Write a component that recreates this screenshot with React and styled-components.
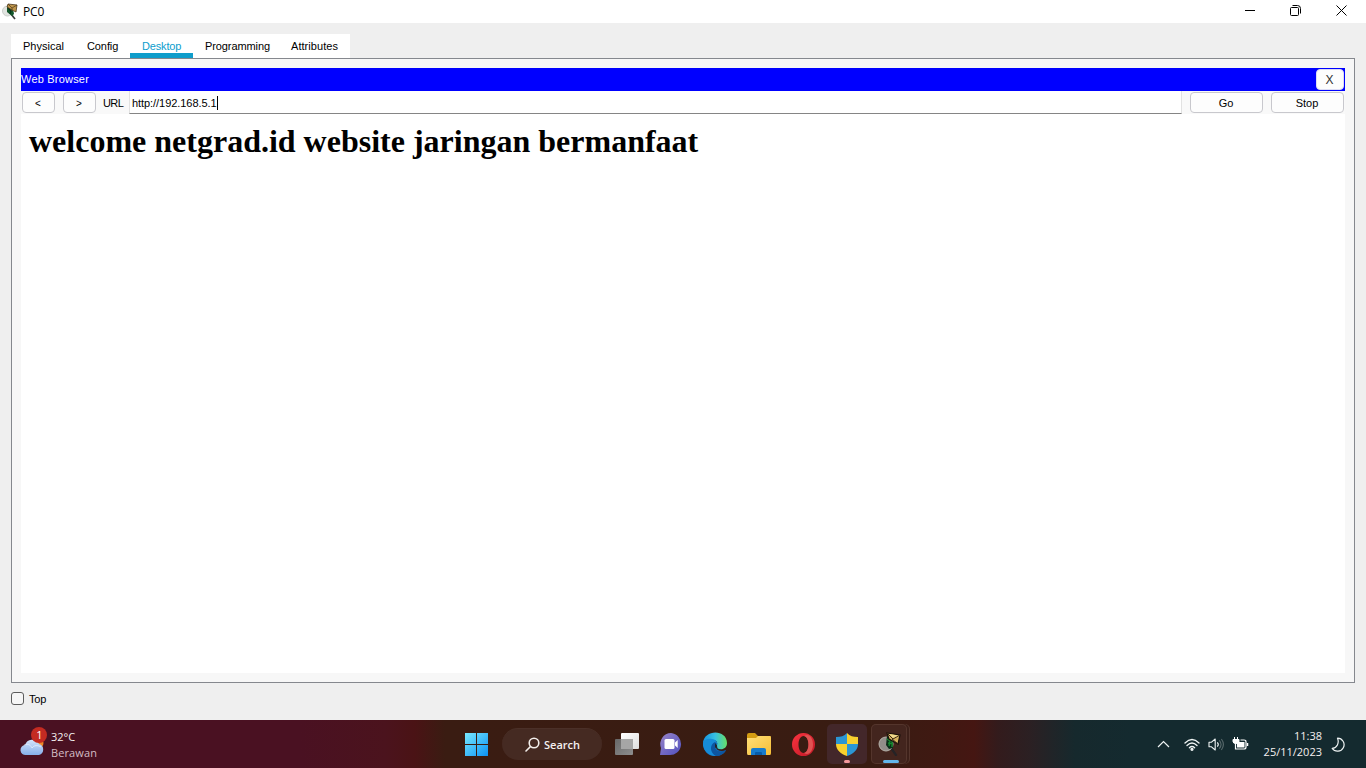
import React from "react";
import styled, { createGlobalStyle } from "styled-components";

const Global = createGlobalStyle`
  * { box-sizing: border-box; }
  body { margin: 0; overflow: hidden; }
  button { font: inherit; color: inherit; }
`;

const Screen = styled.div`
  width: 1366px;
  height: 768px;
  display: flex;
  flex-direction: column;
  background: #efefef;
  font-family: "Liberation Sans", Arial, sans-serif;
  font-size: 11px;
  color: #000;
`;

const TitleBar = styled.header`
  height: 23px;
  display: flex;
  align-items: center;
  background: #fff;
  padding-left: 2px;
  svg { display: block; }
`;

const Title = styled.span`
  flex: 1;
  padding-left: 4px;
  font: 12px/22px "Open Sans", sans-serif;
  letter-spacing: -0.2px;
`;

const WindowControl = styled.button`
  width: ${(p) => p.$w}px;
  height: 22px;
  padding: 0 0 3px;
  border: 0;
  background: none;
  display: flex;
  justify-content: center;
  align-items: center;
`;

const Body = styled.main`
  height: 697px;
  padding: 11px 11px 0;
  display: flex;
  flex-direction: column;
`;

const Tabs = styled.nav`
  display: flex;
  width: 339px;
  height: 24px;
  background: #fff;
`;

const Tab = styled.div`
  width: ${(p) => p.$w}px;
  height: 24px;
  padding-left: 12px;
  line-height: 25px;
  letter-spacing: ${(p) => p.$ls || 0}px;
  white-space: nowrap;
  color: ${(p) => (p.$active ? "#0d9dcd" : "#000")};
  box-shadow: ${(p) => (p.$active ? "inset 0 -5px #0f9dcb" : "none")};
`;

const Panel = styled.section`
  width: 1344px;
  height: 625px;
  border: 1px solid #85888e;
  padding: 9px;
  background: #f7f7f7;
  display: flex;
  flex-direction: column;
`;

const BrowserBar = styled.div`
  height: 23px;
  background: #00f;
  color: #fff;
  display: flex;
  align-items: center;
  justify-content: space-between;
  padding-right: 1px;
  letter-spacing: 0.2px;
`;

const BarTitle = styled.span`
  height: 23px;
  line-height: 23px;
`;

const Button = styled.button`
  width: ${(p) => p.$w}px;
  height: 21px;
  margin-left: ${(p) => p.$ml || 0}px;
  border: 1px solid ${(p) => (p.$plain ? "#dcdcf4" : "#c8c8cd")};
  border-radius: 4px;
  background: #fdfdfd;
  color: ${(p) => (p.$plain ? "#333" : "#000")};
  font-size: ${(p) => p.$fs || 11}px;
  line-height: 19px;
  letter-spacing: 0;
  padding: 1px 1px 0 0;
  text-align: center;
`;

const UrlRow = styled.div`
  height: 23px;
  display: flex;
  align-items: center;
  background: #f9f9f9;
`;

const UrlLabel = styled.label`
  width: 33px;
  padding: 1px 0 0 7px;
  letter-spacing: -0.6px;
`;

const UrlField = styled.div`
  width: 1053px;
  height: 23px;
  padding-left: 2px;
  display: flex;
  align-items: center;
  background: #fff;
  border: solid #e2e2e2;
  border-width: 0 1px 1px;
  border-bottom-color: #858585;
  padding-top: 2px;
  letter-spacing: -0.06px;
`;

const Caret = styled.i`
  width: 1px;
  height: 14px;
  background: #000;
`;

const Page = styled.article`
  height: 559px;
  background: #fff;
  padding: 8px;
`;

const Heading = styled.h1`
  margin: 0;
  font: bold 32px/38px "Liberation Serif", "Times New Roman", serif;
  letter-spacing: 0;
  white-space: nowrap;
`;

const TopOption = styled.label`
  display: flex;
  align-items: center;
  height: 32px;
  gap: 5px;
  letter-spacing: -0.2px;
`;

const Checkbox = styled.span`
  width: 13px;
  height: 13px;
  border: 1px solid #5c5c5c;
  border-radius: 3px;
  background: #f6f6f6;
  margin-top: -1px;
`;

const Taskbar = styled.footer`
  height: 48px;
  display: flex;
  align-items: center;
  color: #f4f0f0;
  font: 11px/16px "Open Sans", sans-serif;
  background: linear-gradient(90deg, #4a1122 0, #4a1122 300px, #4b131d 385px, #4a1315 415px, #3a1c12 445px, #391c12 870px, #3f1912 940px, #451612 974px, #331b1c 998px, #2b2023 1030px, #16292d 1075px, #142a2f 1130px);
`;

const Weather = styled.div`
  width: 465px;
  padding-left: 19px;
  display: flex;
  gap: 4px;
  align-items: center;
  svg { margin-top: -5px; }
`;

const Lines = styled.div`
  width: ${(p) => p.$w}px;
  text-align: ${(p) => p.$align || "left"};
  padding-top: ${(p) => (p.$align ? 0 : 1)}px;
  white-space: nowrap;
`;

const Muted = styled.div`
  color: #d3bdc4;
  letter-spacing: 0.1px;
`;

const Search = styled.div`
  width: 100px;
  height: 32px;
  margin: 0 5px 0 13px;
  padding-left: 23px;
  border-radius: 16px;
  border: 1px solid #4b3028;
  border-width: 1px 0 0;
  background: #452a22;
  display: flex;
  align-items: center;
  gap: 4px;
  font-weight: 600;
`;

const AppButton = styled.div`
  width: 40px;
  height: 40px;
  margin-right: 4px;
  border-radius: 5px;
  display: flex;
  align-items: center;
  justify-content: center;
  position: relative;
  background: ${(p) => p.$bg || "transparent"};
`;

const StackedButton = styled(AppButton)`
  width: 36px;
  margin-right: 8px;
  padding-left: 2px;
  background: #43251e;
  box-shadow: inset 0 0 0 1px #54352c, 2px 0 0 #3d2019, 3px 0 0 #55362d;
`;

const Indicator = styled.i`
  position: absolute;
  bottom: 1px;
  left: ${(p) => p.$left || "50%"};
  width: ${(p) => p.$w}px;
  height: 3px;
  transform: translateX(-50%);
  border-radius: 2px;
  background: ${(p) => p.$color};
`;

const StartSlot = styled.div`
  width: 24px;
  height: 25px;
`;

const Tray = styled.div`
  margin-left: auto;
  display: flex;
  align-items: center;
  padding-right: 20px;
  svg { display: block; flex: none; }
`;

const TrayIcon = styled.span`
  width: ${(p) => p.$w}px;
  margin-right: ${(p) => p.$mr || 0}px;
`;

function TracerIcon() {
  return (
    <svg width="24" height="24" viewBox="0 0 24 24">
      <path d="M13 16l5 7" stroke="#252326" strokeWidth="2.2" strokeLinecap="round" />
      <circle cx="8" cy="12" r="7" fill="#918e89" stroke="#b5b1a9" />
      <path d="M9 4l5 3 1 9-4 1-3-4z" fill="#092d18" />
      <path d="M9 7l3 2-1 5m3-6v7m-4-4l5 1" stroke="#15892e" strokeWidth="1.4" fill="none" />
      <path d="M9 1l13 2-2 9-9-5z" fill="#d4b25e" stroke="#17100a" strokeWidth="1.2" />
      <path d="M9 1l6 6 7-4M14 7l6 5" fill="none" stroke="#3b2814" />
      <path d="M11 2l4 4 5-2.6z" fill="#efd98c" />
    </svg>
  );
}

function SmallTracerIcon() {
  return (
    <svg width="17" height="17" viewBox="0 0 17 17">
      <ellipse cx="5.5" cy="8" rx="5" ry="5" fill="#e1e4e0" stroke="#c9cdca" />
      <path d="M9 11l4 5" stroke="#383b3a" strokeWidth="1.7" />
      <path d="M5 3l6 3 1 5-2 2-5-4z" fill="#12572b" />
      <path d="M6 5l3 3-1 3" fill="none" stroke="#06331a" strokeWidth="1.2" />
      <path d="M6 1l9 1-1 7-4-2-5-3z" fill="#bd954b" stroke="#4b371d" strokeWidth=".8" />
      <path d="M6 1l4 4 5-3M10 5v3" fill="none" stroke="#5c421e" strokeWidth=".8" />
    </svg>
  );
}

function WeatherIcon() {
  return (
    <svg width="28" height="29" viewBox="0 0 28 29">
      <defs>
        <linearGradient id="cloud" x2="0" y2="1">
          <stop stopColor="#d5e5fc" />
          <stop offset="1" stopColor="#86afe9" />
        </linearGradient>
      </defs>
      <circle cx="19" cy="16" r="5.5" fill="#ee8827" />
      <path d="M7 28a5 5 0 0 1-1-10 7.5 7.5 0 0 1 14-1 5.7 5.7 0 0 1 0 11z" fill="url(#cloud)" />
      <path d="M5 18c5-2 7 1 8 3 2-3 6-3 9-1" fill="none" stroke="#eff6ff" opacity=".65" />
      <circle cx="20" cy="8" r="8" fill="#c42b22" />
      <text x="20.5" y="12" fill="#fff" fontSize="11" textAnchor="middle" fontFamily="Open Sans">1</text>
    </svg>
  );
}

function StartIcon() {
  return (
    <svg width="24" height="25" viewBox="0 0 24 25">
      <defs>
        <linearGradient id="start" gradientUnits="userSpaceOnUse" x2="24" y2="24">
          <stop stopColor="#7beaff" />
          <stop offset="1" stopColor="#0990f4" />
        </linearGradient>
      </defs>
      <path fill="url(#start)" d="M0 1h11v11H0zM12 1h11v11H12zM0 13h11v11H0zM12 13h11v11H12z" />
    </svg>
  );
}

function TaskViewIcon() {
  return (
    <svg width="24" height="24" viewBox="0 0 24 24">
      <defs>
        <linearGradient id="front" x2="1" y2="1"><stop stopColor="#fff" /><stop offset="1" stopColor="#ddd" /></linearGradient>
        <linearGradient id="back" x2="1" y2="1"><stop stopColor="#686868" /><stop offset="1" stopColor="#8d8d8d" /></linearGradient>
      </defs>
      <rect x="6" y="1" width="18" height="16" rx="1" fill="url(#front)" />
      <rect y="7" width="18" height="16" rx="1" fill="url(#back)" />
      <path d="M6 7h12v10H6z" fill="#a6a6a6" />
    </svg>
  );
}

function ChatIcon() {
  return (
    <svg width="24" height="24" viewBox="0 0 24 24">
      <defs><linearGradient id="chat" x2="1" y2="1"><stop stopColor="#9884c8" /><stop offset="1" stopColor="#5050bf" /></linearGradient></defs>
      <path d="M12 1a11 11 0 1 1-2 22H1l1-7A11 11 0 0 1 12 1z" fill="url(#chat)" />
      <rect x="5.5" y="7" width="10" height="10" rx="1.5" fill="#fff" />
      <path d="M16 10.5l2.7-2.5v8L16 13.5z" fill="#fff" />
    </svg>
  );
}

function EdgeIcon() {
  return (
    <svg width="24" height="24" viewBox="0 0 24 24">
      <defs>
        <linearGradient id="edgeTop" x1="0" x2="1"><stop stopColor="#1593e0" /><stop offset=".5" stopColor="#36bfe4" /><stop offset="1" stopColor="#67df65" /></linearGradient>
        <linearGradient id="edgeBase" x2="1" y2="1"><stop stopColor="#168bd7" /><stop offset="1" stopColor="#0d58a6" /></linearGradient>
      </defs>
      <path d="M0 11A12 12 0 0 0 12 24c5 0 9-2 11-6-4 2-9 1-11-3z" fill="url(#edgeBase)" />
      <path d="M0 11C1-3 24-3 24 11c0 5-4 7-8 6-4 0-3-2-2-4 1-3-1-5-4-5-5 0-9 1-10 3z" fill="url(#edgeTop)" />
      <path d="M0 11c0-3 5-5 9-4 4 0 6 4 5 6-5-1-6 4-3 8l2 3C5 24 0 18 0 11z" fill="#168cd9" />
      <path d="M12 10c-6 3-5 11 1 14 4 0 8-2 10-6-6 3-11 1-11-3 0-2 1-3 2-3z" fill="#0d55a0" />
      <path d="M12.3 11.3c-1.3 4 1.7 6.5 6 6.7-3-.7-4.6-2-4.2-4.5z" fill="#20252e" />
    </svg>
  );
}

function FolderIcon() {
  return (
    <svg width="25" height="23" viewBox="0 0 25 23">
      <defs><linearGradient id="folder" x2="1" y2="1"><stop stopColor="#ffdf79" /><stop offset="1" stopColor="#f6bd35" /></linearGradient></defs>
      <path d="M0 2q0-2 2-2h6l3 3h12q1 0 1 2v4H0z" fill="#d49c12" />
      <path d="M0 5h9l2-2h12q1 0 1 2v15q0 2-1 2H1q-1 0-1-2z" fill="url(#folder)" />
      <path d="M4 22v-5q0-2 2-2h11q2 0 2 2v5z" fill="#167bcd" />
      <path d="M8 22v-2q0-1 1-1h5q1 0 1 1v2z" fill="#075ba8" />
    </svg>
  );
}

function OperaIcon() {
  return (
    <svg width="23" height="23" viewBox="0 0 23 23">
      <defs><linearGradient id="opera" x2="1" y2="1"><stop stopColor="#fc3440" /><stop offset="1" stopColor="#bd1825" /></linearGradient></defs>
      <path fillRule="evenodd" fill="url(#opera)" d="M11.5 0a11.5 11.5 0 1 0 0 23 11.5 11.5 0 0 0 0-23zm0 3c3 0 5 4 5 8.5s-2 8.5-5 8.5-5-4-5-8.5 2-8.5 5-8.5z" />
      <path d="M12 3c5-3 9 2 9 8.5S17 23 12 20c6-1 6-16 0-17z" fill="#df5352" />
    </svg>
  );
}

function ShieldIcon() {
  return (
    <svg width="22" height="23" viewBox="0 0 22 23">
      <clipPath id="shield"><path d="M11 0c3 3 6 4 11 4v7c0 6-5 10-11 12C5 21 0 17 0 11V4c5 0 8-1 11-4z" /></clipPath>
      <g clipPath="url(#shield)">
        <path d="M0 0h11v11H0zM11 11h11v12H11z" fill="#2b96d4" />
        <path d="M11 0h11v11H11zM0 11h11v12H0z" fill="#f8d02e" />
      </g>
    </svg>
  );
}

const tabs = [
  ["Physical", 64, 0], ["Config", 55, -0.1], ["Desktop", 63, -0.15], ["Programming", 86, -0.1], ["Attributes", 71, 0.05],
];

export default function App() {
  return (
    <Screen>
      <Global />
      <TitleBar>
        <SmallTracerIcon />
        <Title>PC0</Title>
        <WindowControl $w={46} aria-label="Minimize">
          <svg width="10" height="10"><path d="M0 5.5h10" stroke="#000" /></svg>
        </WindowControl>
        <WindowControl $w={44} aria-label="Restore">
          <svg width="11" height="11" fill="none" stroke="#000"><rect x=".5" y="2.5" width="8" height="8" rx="1" /><path d="M2.5 .5h5q3 0 3 3v5" /></svg>
        </WindowControl>
        <WindowControl $w={49} aria-label="Close">
          <svg width="11" height="11"><path d="M.5 .5l10 10m0-10l-10 10" stroke="#000" /></svg>
        </WindowControl>
      </TitleBar>
      <Body>
        <Tabs>
          {tabs.map(([name, w, ls]) => (
            <Tab key={name} $w={w} $ls={ls} $active={name === "Desktop"}>{name}</Tab>
          ))}
        </Tabs>
        <Panel>
          <BrowserBar>
            <BarTitle>Web Browser</BarTitle>
            <Button $w={28} $plain $fs={12}>X</Button>
          </BrowserBar>
          <UrlRow>
            <Button $w={33} $ml={1} $fs={10}>&lt;</Button>
            <Button $w={33} $ml={8} $fs={10}>&gt;</Button>
            <UrlLabel>URL</UrlLabel>
            <UrlField>http://192.168.5.1<Caret /></UrlField>
            <Button $w={73} $ml={8}>Go</Button>
            <Button $w={73} $ml={8}>Stop</Button>
          </UrlRow>
          <Page>
            <Heading>welcome netgrad.id website jaringan bermanfaat</Heading>
          </Page>
        </Panel>
        <TopOption><Checkbox />Top</TopOption>
      </Body>
      <Taskbar>
        <Weather>
          <WeatherIcon />
          <Lines $w={60}>
            <div>32°C</div>
            <Muted>Berawan</Muted>
          </Lines>
        </Weather>
        <StartSlot><StartIcon /></StartSlot>
        <Search>
          <svg width="15" height="15" fill="none" stroke="#f3eeeb" strokeWidth="1.6" strokeLinecap="round"><circle cx="9" cy="6" r="4.8" /><path d="M5.5 9.5L1 14" /></svg>
          Search
        </Search>
        <AppButton><TaskViewIcon /></AppButton>
        <AppButton><ChatIcon /></AppButton>
        <AppButton><EdgeIcon /></AppButton>
        <AppButton><FolderIcon /></AppButton>
        <AppButton><OperaIcon /></AppButton>
        <AppButton $bg="#43272a"><ShieldIcon /><Indicator $w={6} $color="#f5989c" /></AppButton>
        <StackedButton><TracerIcon /><Indicator $left="20px" $w={16} $color="#63b6eb" /></StackedButton>
        <Tray>
          <TrayIcon $w={13} $mr={14}>
            <svg width="13" height="8" fill="none" stroke="#eef3f3" strokeWidth="1.2"><path d="M1 7l5.5-5.5L12 7" /></svg>
          </TrayIcon>
          <TrayIcon $w={16} $mr={8}>
            <svg width="16" height="13" fill="none" stroke="#eef3f3" strokeWidth="1.3" strokeLinecap="round"><path d="M1 5q7-7 14 0M3 7.5q5-5 10 0M5.4 9.8q2.6-2.5 5.2 0" /><circle cx="8" cy="11.3" r="1" fill="#fff" /></svg>
          </TrayIcon>
          <TrayIcon $w={16} $mr={8}>
            <svg width="16" height="13" fill="none" stroke="#eef3f3" strokeWidth="1.1" strokeLinejoin="round"><path d="M1 4.2h2.5L7.2 1v11L3.5 8.8H1zM9.3 4.3q2 2.2 0 4.4" /><path d="M11.3 2.4q3.5 4.1 0 8.2M13.4 1q4 5.5 0 11" stroke="#59696c" /></svg>
          </TrayIcon>
          <TrayIcon $w={17} $mr={13}>
            <svg width="17" height="14" fill="none" stroke="#fff"><path d="M2.5 0v3M5.5 0v3" /><path d="M1 2.5h6v2q0 2-3 2t-3-2z" fill="#fff" /><path d="M3.5 6v6H12q2 0 2-2V5q0-2-2-2H8.5" strokeWidth="1.2" /><rect x="5.5" y="5.5" width="6.5" height="4.5" fill="#fff" /><path d="M15.5 6v3" strokeWidth="1.5" /></svg>
          </TrayIcon>
          <Lines $w={60} $align="right"><div>11:38</div><div>25/11/2023</div></Lines>
          <TrayIcon $w={24}>
            <svg width="24" height="15" viewBox="-9 0 24 15" fill="none" stroke="#eef3f3" strokeWidth="1.2" strokeLinejoin="round"><path d="M6.5 1.2a6.5 6.5 0 1 1-5.3 10.2C6 11 8.5 6 6.5 1.2z" /></svg>
          </TrayIcon>
        </Tray>
      </Taskbar>
    </Screen>
  );
}
